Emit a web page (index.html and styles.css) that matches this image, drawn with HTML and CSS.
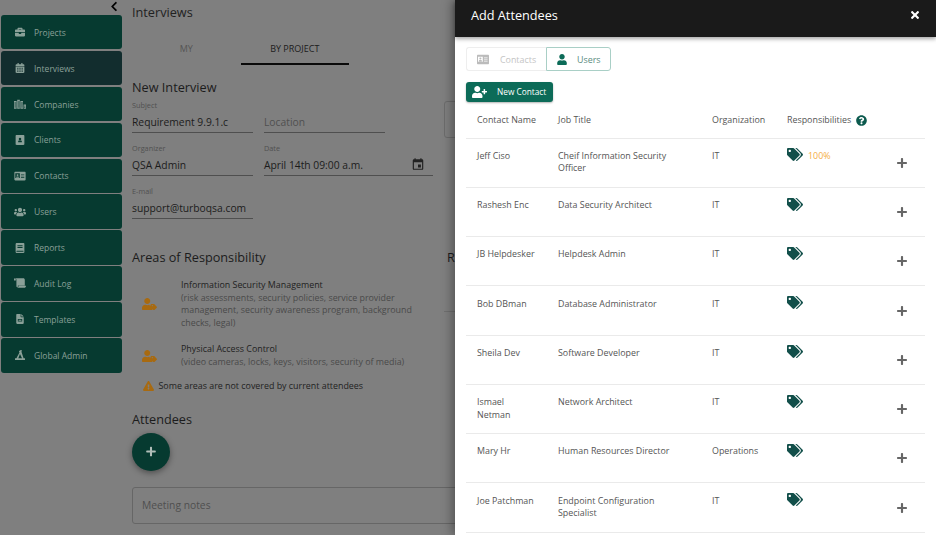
FILE: index.html
```html
<!DOCTYPE html>
<html lang="en">
<head>
<meta charset="utf-8">
<title>Add Attendees</title>
<link rel="stylesheet" href="styles.css">
</head>
<body>
<svg class="defs" aria-hidden="true">
  <symbol id="i-chevron" viewBox="0 0 320 512"><path d="M34.52 239.03L228.87 44.69c9.37-9.37 24.57-9.37 33.94 0l22.67 22.67c9.36 9.36 9.37 24.52.04 33.9L131.49 256l154.02 154.75c9.34 9.38 9.32 24.54-.04 33.9l-22.67 22.67c-9.37 9.37-24.57 9.37-33.94 0L34.52 272.97c-9.37-9.37-9.37-24.57 0-33.94z"/></symbol>
  <symbol id="i-briefcase" viewBox="0 0 512 512"><path d="M320 336c0 8.84-7.16 16-16 16h-96c-8.84 0-16-7.16-16-16v-48H0v144c0 25.6 22.4 48 48 48h416c25.6 0 48-22.4 48-48V288H320v48zm144-208h-80V80c0-25.6-22.4-48-48-48H176c-25.6 0-48 22.4-48 48v48H48c-25.6 0-48 22.4-48 48v80h512v-80c0-25.6-22.4-48-48-48zm-144 0H192V96h128v32z"/></symbol>
  <symbol id="i-calendar" viewBox="0 0 448 512"><path fill-rule="evenodd" d="M0 192h448v272c0 26.500-21.500 48-48 48H48c-26.500 0-48-21.500-48-48zM80 240v48h64v-48zm112 0v48h64v-48zm112 0v48h64v-48zM80 336v48h64v-48zm112 0v48h64v-48zm112 0v48h64v-48zM80 424v40h64v-40zm112 0v40h64v-40zm112 0v40h64v-40zM48 64h48V16c0-9 7-16 16-16h32c9 0 16 7 16 16v48h128V16c0-9 7-16 16-16h32c9 0 16 7 16 16v48h48c26.500 0 48 21.500 48 48v48H0v-48c0-26.500 21.500-48 48-48z"/></symbol>
  <symbol id="i-companies" viewBox="0 0 640 512"><path fill-rule="evenodd" d="M0 96h140v416H0zM40 150v300h20V150zm50 0v300h20V150zM170 32h140v480H170zm40 60v360h20V92zm50 0v360h20V92zM340 96h140v416H340zm40 54v300h20V150zm50 0v300h20V150zM510 288h130v224H510zm40 60v40h50v-40zm0 80v40h50v-40z"/></symbol>
  <symbol id="i-addressbook" viewBox="0 0 448 512"><path fill-rule="evenodd" d="M48 0h352c26.500 0 48 21.500 48 48v416c0 26.500-21.500 48-48 48H48c-26.500 0-48-21.500-48-48V48C0 21.500 21.500 0 48 0zm176 136a64 64 0 1 0 0 128 64 64 0 0 0 0-128zm-96 220c0 12 10 20 22 20h148c12 0 22-8 22-20v-20c0-32-27-56-60-56h-72c-33 0-60 24-60 56z"/></symbol>
  <symbol id="i-card" viewBox="0 0 576 512"><path fill-rule="evenodd" d="M48 32h480c26.500 0 48 21.500 48 48v352c0 26.500-21.500 48-48 48H48c-26.500 0-48-21.500-48-48V80c0-26.500 21.500-48 48-48zm0 88v240h230V120zm290 40v32h170v-32zm0 80v32h170v-32zm0 80v32h170v-32zM163 160a50 50 0 1 1 0 100 50 50 0 0 1 0-100zm-75 176c0-28 24-52 55-52h40c31 0 55 24 55 52v14H88z"/></symbol>
  <symbol id="i-users" viewBox="0 0 640 512"><path d="M96 224c35.300 0 64-28.700 64-64s-28.700-64-64-64-64 28.700-64 64 28.700 64 64 64zm448 0c35.300 0 64-28.700 64-64s-28.700-64-64-64-64 28.700-64 64 28.700 64 64 64zm32 32h-64c-17.600 0-33.500 7.100-45.100 18.600 40.300 22.100 68.900 62 75.100 109.400h66c17.700 0 32-14.300 32-32v-32c0-35.300-28.700-64-64-64zm-256 0c61.900 0 112-50.100 112-112S381.900 32 320 32 208 82.100 208 144s50.100 112 112 112zm76.800 32h-8.300c-20.800 10-43.900 16-68.500 16s-47.600-6-68.500-16h-8.300C179.600 288 128 339.600 128 403.200V432c0 26.500 21.500 48 48 48h288c26.500 0 48-21.500 48-48v-28.800c0-63.600-51.600-115.200-115.200-115.200zm-223.700-13.400C161.500 263.100 145.600 256 128 256H64c-35.300 0-64 28.700-64 64v32c0 17.700 14.300 32 32 32h65.900c6.300-47.400 34.900-87.300 75.200-109.400z"/></symbol>
  <symbol id="i-book" viewBox="0 0 448 512"><path fill-rule="evenodd" d="M64 0h336c26.500 0 48 21.500 48 48v416c0 26.500-21.500 48-48 48H64c-35 0-64-29-64-64V64C0 29 29 0 64 0zm30 110v50h260v-50zm0 100v50h260v-50zM64 392c-14 0-24 14-24 28s10 28 24 28h336v-56z"/></symbol>
  <symbol id="i-scroll" viewBox="0 0 640 512"><path d="M48 0C21 0 0 21 0 48v64c0 9 7 16 16 16h80V48C96 21 75 0 48 0zm160 432V384h368V80c0-44-36-80-80-80H80c20 12 48 30 48 80v352c0 35 32 64 70 64zm32-16v16c0 44-36 80-80 80h384c53 0 96-43 96-96 0-9-7-16-16-16H256c-9 0-16 7-16 16z"/></symbol>
  <symbol id="i-file" viewBox="0 0 384 512"><path fill-rule="evenodd" d="M224 0v136c0 13 11 24 24 24h136v304c0 27-21 48-48 48H48c-27 0-48-21-48-48V48C0 21 21 0 48 0zM80 250v130h224V250zm40 40h144v50H120zM256 0l128 128H256z"/></symbol>
  <symbol id="i-admin" viewBox="0 0 512 512"><path fill-rule="evenodd" d="M300 0l60 30-30 60 110 330h72v92H0v-92h70L230 130 200 70l50-40zM255 210L170 420h190z"/></symbol>
  <symbol id="i-user" viewBox="0 0 448 512"><path d="M224 256c70.700 0 128-57.300 128-128S294.700 0 224 0 96 57.300 96 128s57.300 128 128 128zm89.600 32h-16.700c-22.200 10.200-46.900 16-72.900 16s-50.600-5.800-72.900-16h-16.700C60.200 288 0 348.200 0 422.400V464c0 26.500 21.500 48 48 48h352c26.500 0 48-21.500 48-48v-41.600c0-74.200-60.200-134.400-134.400-134.400z"/></symbol>
  <symbol id="i-usertag" viewBox="0 0 640 512"><path d="M224 256c70.700 0 128-57.300 128-128S294.700 0 224 0 96 57.300 96 128s57.300 128 128 128zm89.600 32h-16.700c-22.200 10.200-46.900 16-72.900 16s-50.600-5.800-72.900-16h-16.700C60.200 288 0 348.200 0 422.400V464c0 26.500 21.500 48 48 48h352c26.500 0 48-21.500 48-48v-41.600c0-20-4-38-12-55L300 300zM630 370L520 260c-6-6-14-9-22-9H400c-18 0-32 14-32 32v98c0 8 3 16 9 22l110 110c12 12 32 12 45 0l98-98c12-13 12-33 0-45zM440 350a24 24 0 1 1 0-48 24 24 0 0 1 0 48z"/></symbol>
  <symbol id="i-warning" viewBox="0 0 576 512"><path d="M569.517 440.013C587.975 472.007 564.806 512 527.940 512H48.054c-36.937 0-59.999-40.055-41.577-71.987L246.423 23.985c18.467-32.009 64.720-31.951 83.154 0l239.940 416.028zM288 354c-25.405 0-46 20.595-46 46s20.595 46 46 46 46-20.595 46-46-20.595-46-46-46zm-43.673-165.346l7.418 136c.347 6.364 5.609 11.346 11.982 11.346h48.546c6.373 0 11.635-4.982 11.982-11.346l7.418-136c.375-6.874-5.098-12.654-11.982-12.654h-63.383c-6.884 0-12.356 5.780-11.981 12.654z"/></symbol>
  <symbol id="i-plus" viewBox="0 0 448 512"><path d="M416 208H272V64c0-17.670-14.330-32-32-32h-32c-17.670 0-32 14.330-32 32v144H32c-17.670 0-32 14.330-32 32v32c0 17.670 14.330 32 32 32h144v144c0 17.670 14.330 32 32 32h32c17.670 0 32-14.330 32-32V304h144c17.670 0 32-14.330 32-32v-32c0-17.670-14.330-32-32-32z"/></symbol>
  <symbol id="i-times" viewBox="0 0 352 512"><path d="M242.720 256l100.070-100.070c12.280-12.280 12.280-32.190 0-44.480l-22.240-22.240c-12.280-12.280-32.190-12.280-44.480 0L176 189.280 75.930 89.210c-12.280-12.280-32.190-12.280-44.480 0L9.210 111.450c-12.280 12.280-12.280 32.190 0 44.480L109.280 256 9.210 356.070c-12.280 12.280-12.280 32.190 0 44.480l22.240 22.240c12.280 12.280 32.200 12.280 44.480 0L176 322.720l100.070 100.070c12.280 12.280 32.200 12.280 44.480 0l22.240-22.240c12.280-12.280 12.280-32.190 0-44.480L242.720 256z"/></symbol>
  <symbol id="i-userplus" viewBox="0 0 640 512"><path d="M624 208h-64v-64c0-8.800-7.200-16-16-16h-32c-8.800 0-16 7.200-16 16v64h-64c-8.800 0-16 7.200-16 16v32c0 8.800 7.200 16 16 16h64v64c0 8.800 7.200 16 16 16h32c8.800 0 16-7.200 16-16v-64h64c8.800 0 16-7.200 16-16v-32c0-8.800-7.200-16-16-16zm-400 48c70.700 0 128-57.300 128-128S294.700 0 224 0 96 57.300 96 128s57.300 128 128 128zm89.600 32h-16.700c-22.200 10.200-46.900 16-72.900 16s-50.600-5.800-72.900-16h-16.700C60.200 288 0 348.200 0 422.400V464c0 26.500 21.500 48 48 48h352c26.500 0 48-21.500 48-48v-41.600c0-74.200-60.200-134.400-134.400-134.400z"/></symbol>
  <symbol id="i-question" viewBox="0 0 512 512"><path d="M504 256c0 136.997-111.043 248-248 248S8 392.997 8 256C8 119.083 119.043 8 256 8s248 111.083 248 248zM262.655 90c-54.497 0-89.255 22.957-116.549 63.758-3.536 5.286-2.353 12.415 2.715 16.258l34.699 26.310c5.205 3.947 12.621 3.008 16.665-2.122 17.864-22.658 30.113-35.797 57.303-35.797 20.429 0 45.698 13.148 45.698 32.958 0 14.976-12.363 22.667-32.534 33.976C247.128 238.528 216 254.941 216 296v4c0 6.627 5.373 12 12 12h56c6.627 0 12-5.373 12-12v-1.333c0-28.462 83.186-29.647 83.186-106.667 0-58.002-60.165-102-116.531-102zM256 338c-25.365 0-46 20.635-46 46 0 25.364 20.635 46 46 46s46-20.636 46-46c0-25.365-20.635-46-46-46z"/></symbol>
  <symbol id="i-tags" viewBox="0 0 640 512"><path d="M497.941 225.941L286.059 14.059A48 48 0 0 0 252.118 0H48C21.490 0 0 21.490 0 48v204.118a48 48 0 0 0 14.059 33.941l211.882 211.882c18.744 18.745 49.136 18.746 67.882 0l204.118-204.118c18.745-18.745 18.745-49.137 0-67.882zM112 160c-26.510 0-48-21.490-48-48s21.490-48 48-48 48 21.490 48 48-21.490 48-48 48zm513.941 133.823L421.823 497.941c-18.745 18.745-49.137 18.745-67.882 0l-.360-.360L527.640 323.522c16.999-16.999 26.360-39.600 26.360-63.640s-9.362-46.641-26.360-63.640L331.397 0h48.721a48 48 0 0 1 33.941 14.059l211.882 211.882c18.745 18.745 18.745 49.137 0 67.882z"/></symbol>
  <symbol id="i-date" viewBox="0 0 24 24"><path d="M19 4h-1V2h-2v2H8V2H6v2H5a2 2 0 0 0-2 2v14a2 2 0 0 0 2 2h14a2 2 0 0 0 2-2V6a2 2 0 0 0-2-2zm0 16H5V9h14zM12 13h5v5h-5z"/></symbol>
</svg>

<div class="page">
  <nav class="sidebar">
    <div class="collapse"><svg class="icon-collapse"><use href="#i-chevron"/></svg></div>
    <a class="nav-item"><span class="nav-icon"><svg class="ni"><use href="#i-briefcase"/></svg></span>Projects</a>
    <a class="nav-item active"><span class="nav-icon"><svg class="ni"><use href="#i-calendar"/></svg></span>Interviews</a>
    <a class="nav-item"><span class="nav-icon"><svg class="ni"><use href="#i-companies"/></svg></span>Companies</a>
    <a class="nav-item"><span class="nav-icon"><svg class="ni"><use href="#i-addressbook"/></svg></span>Clients</a>
    <a class="nav-item"><span class="nav-icon"><svg class="ni"><use href="#i-card"/></svg></span>Contacts</a>
    <a class="nav-item"><span class="nav-icon"><svg class="ni"><use href="#i-users"/></svg></span>Users</a>
    <a class="nav-item"><span class="nav-icon"><svg class="ni"><use href="#i-book"/></svg></span>Reports</a>
    <a class="nav-item"><span class="nav-icon"><svg class="ni"><use href="#i-scroll"/></svg></span>Audit Log</a>
    <a class="nav-item"><span class="nav-icon"><svg class="ni"><use href="#i-file"/></svg></span>Templates</a>
    <a class="nav-item"><span class="nav-icon"><svg class="ni"><use href="#i-admin"/></svg></span>Global Admin</a>
  </nav>

  <main class="main">
    <div class="columns">
      <div class="col-left">
        <h1 class="page-title">Interviews</h1>
        <div class="tabs">
          <div class="tab">MY</div>
          <div class="tab tab-active">BY PROJECT</div>
        </div>
        <h2 class="heading heading-new">New Interview</h2>
        <div class="form">
          <div class="field"><div class="label">Subject</div><div class="value">Requirement 9.9.1.c</div></div>
          <div class="field"><div class="label">&nbsp;</div><div class="value placeholder">Location</div></div>
          <div class="field"><div class="label">Organizer</div><div class="value">QSA Admin</div></div>
          <div class="field"><div class="label">Date</div><div class="value value-date">April 14th 09:00 a.m.<svg class="icon-date"><use href="#i-date"/></svg></div></div>
          <div class="field"><div class="label">E-mail</div><div class="value">support@turboqsa.com</div></div>
        </div>
        <h2 class="heading heading-areas">Areas of Responsibility</h2>
        <div class="area area-first">
          <div class="area-icon"><svg class="icon-usertag"><use href="#i-usertag"/></svg></div>
          <div class="area-text">
            <div class="area-title">Information Security Management</div>
            <div>(risk assessments, security policies, service provider management, security awareness program, background checks, legal)</div>
          </div>
        </div>
        <div class="area area-second">
          <div class="area-icon"><svg class="icon-usertag"><use href="#i-usertag"/></svg></div>
          <div class="area-text">
            <div class="area-title">Physical Access Control</div>
            <div>(video cameras, locks, keys, visitors, security of media)</div>
          </div>
        </div>
        <div class="notice"><svg class="icon-warning"><use href="#i-warning"/></svg>Some areas are not covered by current attendees</div>
        <h2 class="heading heading-attendees">Attendees</h2>
        <div class="fab"><svg class="icon-fab"><use href="#i-plus"/></svg></div>
      </div>
      <div class="col-right">
        <div class="side-card"></div>
        <h2 class="heading heading-side">R</h2>
        <div class="side-line"></div>
      </div>
    </div>
    <div class="notes">Meeting notes</div>
  </main>
</div>

<aside class="drawer">
  <header class="drawer-head">
    <span class="drawer-title">Add Attendees</span>
    <svg class="icon-close"><use href="#i-times"/></svg>
  </header>
  <div class="drawer-body">
    <div class="toggle">
      <div class="toggle-btn toggle-off"><svg class="icon-card"><use href="#i-card"/></svg>Contacts</div>
      <div class="toggle-btn toggle-on"><svg class="icon-user"><use href="#i-user"/></svg>Users</div>
    </div>
    <div class="new-btn"><svg class="icon-userplus"><use href="#i-userplus"/></svg>New Contact</div>
    <div class="table">
      <div class="row row-head">
        <div>Contact Name</div><div>Job Title</div><div>Organization</div>
        <div class="resp-head">Responsibilities<svg class="icon-question"><use href="#i-question"/></svg></div><div></div>
      </div>
      <div class="row"><div>Jeff Ciso</div><div>Cheif Information Security Officer</div><div>IT</div><div class="resp"><svg class="icon-tags"><use href="#i-tags"/></svg><span class="pct">100%</span></div><svg class="icon-add"><use href="#i-plus"/></svg></div>
      <div class="row"><div>Rashesh Enc</div><div>Data Security Architect</div><div>IT</div><div class="resp"><svg class="icon-tags"><use href="#i-tags"/></svg></div><svg class="icon-add"><use href="#i-plus"/></svg></div>
      <div class="row"><div>JB Helpdesker</div><div>Helpdesk Admin</div><div>IT</div><div class="resp"><svg class="icon-tags"><use href="#i-tags"/></svg></div><svg class="icon-add"><use href="#i-plus"/></svg></div>
      <div class="row"><div>Bob DBman</div><div>Database Administrator</div><div>IT</div><div class="resp"><svg class="icon-tags"><use href="#i-tags"/></svg></div><svg class="icon-add"><use href="#i-plus"/></svg></div>
      <div class="row"><div>Sheila Dev</div><div>Software Developer</div><div>IT</div><div class="resp"><svg class="icon-tags"><use href="#i-tags"/></svg></div><svg class="icon-add"><use href="#i-plus"/></svg></div>
      <div class="row"><div>Ismael Netman</div><div>Network Architect</div><div>IT</div><div class="resp"><svg class="icon-tags"><use href="#i-tags"/></svg></div><svg class="icon-add"><use href="#i-plus"/></svg></div>
      <div class="row"><div>Mary Hr</div><div>Human Resources Director</div><div>Operations</div><div class="resp"><svg class="icon-tags"><use href="#i-tags"/></svg></div><svg class="icon-add"><use href="#i-plus"/></svg></div>
      <div class="row"><div>Joe Patchman</div><div>Endpoint Configuration Specialist</div><div>IT</div><div class="resp"><svg class="icon-tags"><use href="#i-tags"/></svg></div><svg class="icon-add"><use href="#i-plus"/></svg></div>
    </div>
  </div>
</aside>
</body>
</html>
```

FILE: styles.css
```css
* { box-sizing: border-box; }
html, body { margin: 0; height: 535px; overflow: hidden; }
body { position: relative; width: 936px; background: #7f7f7f; font-family: "Open Sans", sans-serif; color: #1c1c1c; }
.defs { position: absolute; width: 0; height: 0; }
svg { fill: currentColor; display: block; flex: none; }

.page { display: flex; height: 535px; overflow: hidden; }

.sidebar { flex: none; width: 120.500px; margin-left: 1px; margin-right: 10.500px; display: flex; flex-direction: column; gap: 1.400px; }
.collapse { height: 13.600px; display: flex; justify-content: flex-end; padding-right: 4px; padding-top: 1px; color: #000; }
.icon-collapse { width: 8px; height: 11px; }
.nav-item { height: 34.500px; display: flex; align-items: center; background: #063a30; border-radius: 3px; color: #8aa098; font-size: 8.500px; }
.nav-item.active { background: #122d2e; }
.nav-icon { width: 33px; display: flex; justify-content: center; padding-left: 4px; }
.ni { width: 12px; height: 10px; }

.main { flex: none; width: 804px; }
.columns { display: flex; height: 471px; }
.col-left { flex: none; width: 315px; }
.col-right { flex: none; width: 300px; margin-left: -3px; padding-top: 101px; }

.page-title { margin: 0; font-size: 12.700px; font-weight: 400; line-height: 24px; color: #222; }
.tabs { display: flex; margin-top: 10px; height: 31px; }
.tab { width: 108.500px; display: flex; align-items: center; justify-content: center; font-size: 9px; color: #555; border-bottom: 2px solid transparent; }
.tab-active { color: #1c1c1c; border-bottom-color: #0a0a0a; }

.heading { margin: 0; font-size: 12.700px; font-weight: 400; line-height: 20px; color: #1c1c1c; }
.heading-new { margin-top: 12px; }
.form { display: grid; grid-template-columns: 121px 169px; column-gap: 11px; row-gap: 9.750px; margin-top: 3px; }
.field { display: flex; flex-direction: column; height: 33px; }
.field:nth-child(2) { width: 121px; }
.label { font-size: 7.300px; line-height: 11px; color: #505050; }
.value { height: 22px; line-height: 22px; font-size: 10.300px; color: #1c1c1c; border-bottom: 1px solid #4f4f4f; }
.placeholder { color: #505050; }
.value-date { display: flex; justify-content: space-between; }
.icon-date { width: 14px; height: 14px; margin-top: 3px; margin-right: 8px; color: #222; }

.heading-areas { margin-top: 28px; }
.area { display: flex; font-size: 8.900px; line-height: 12.500px; color: #4a4a4a; }
.area-first { margin-top: 12.500px; }
.area-second { margin-top: 14px; }
.area-icon { flex: none; width: 49px; display: flex; align-items: center; padding-left: 10px; color: #a86a10; }
.icon-usertag { width: 15px; height: 12px; }
.area-text { width: 235px; }
.area-title { color: #222; }
.notice { display: flex; align-items: center; margin-top: 12px; padding-left: 11px; font-size: 8.900px; line-height: 12.500px; color: #222; }
.icon-warning { width: 11px; height: 10px; margin-right: 4.500px; color: #a86a10; }
.heading-attendees { margin-top: 16px; }
.fab { width: 38px; height: 38px; margin-top: 4px; border-radius: 50%; background: #063a30; color: #b0bdb8; display: flex; align-items: center; justify-content: center; box-shadow: 0 2px 6px rgba(0,0,0,.4); }
.icon-fab { width: 10px; height: 11px; }

.side-card { width: 40px; height: 37px; border: 1px solid #6c6c6c; border-radius: 3px; }
.heading-side { margin-top: 109px; margin-left: 3px; }
.side-line { margin-top: 44px; height: 1px; background: #6f6f6f; }

.notes { margin-top: 16px; height: 37px; width: 700px; border: 1px solid #666; border-radius: 3px; padding-left: 9px; line-height: 35px; font-size: 10.300px; color: #4f4f4f; }

.drawer { position: absolute; top: 0; right: 0; width: 481px; height: 535px; background: #fff; box-shadow: -3px 0 10px rgba(0,0,0,.35); }
.drawer-head { height: 36.500px; background: #1a1a1a; color: #fff; display: flex; align-items: center; justify-content: space-between; padding: 0 17px 6px 16px; box-shadow: 0 2px 4px rgba(0,0,0,.35); }
.drawer-title { font-size: 12.700px; }
.icon-close { width: 8px; height: 12px; }
.drawer-body { padding: 10.500px 11px 0; }

.toggle { display: flex; height: 24px; font-size: 8.900px; }
.toggle-btn { display: flex; align-items: center; border: 1px solid #eee; border-radius: 3px 0 0 3px; }
.toggle-off { width: 80px; padding-left: 10px; color: #c4c4c4; border-right: 0; }
.toggle-on { width: 65px; padding-left: 10px; color: #5b8c80; border-color: #a9cfc6; border-radius: 0 3px 3px 0; }
.icon-card { width: 12px; height: 11px; margin-right: 11px; color: #bbb; }
.icon-user { width: 10px; height: 11px; margin-right: 10px; color: #0c6b58; }
.new-btn { display: flex; align-items: center; width: 87px; height: 19.500px; margin-top: 11px; padding-left: 6px; background: #0c6b58; border-radius: 3px; color: #fff; font-size: 8.300px; box-shadow: 0 1px 2px rgba(0,0,0,.3); }
.icon-userplus { width: 15px; height: 12px; margin-right: 10px; }

.row { display: grid; grid-template-columns: 92px 154px 75px 103px 35px; height: 49.250px; padding-top: 11.250px; font-size: 8.900px; line-height: 12.500px; color: #555; border-bottom: 1px solid #eaeaea; }
.row > div:first-child { padding: 0 21px 0 11px; }
.row > div:nth-child(2) { padding-right: 30px; }
.row-head { height: 37px; padding-top: 2px; align-items: center; }
.resp-head { display: flex; align-items: center; }
.icon-question { width: 11px; height: 11px; margin-left: 5px; color: #0c5a4e; }
.resp { display: flex; align-items: flex-start; }
.icon-tags { width: 16px; height: 13px; margin-top: -1.500px; color: #124f4a; }
.pct { margin-left: 5px; color: #f5ac3f; }
.icon-add { width: 10px; height: 12px; margin: 7px 0 0 7px; color: #666; }
```
